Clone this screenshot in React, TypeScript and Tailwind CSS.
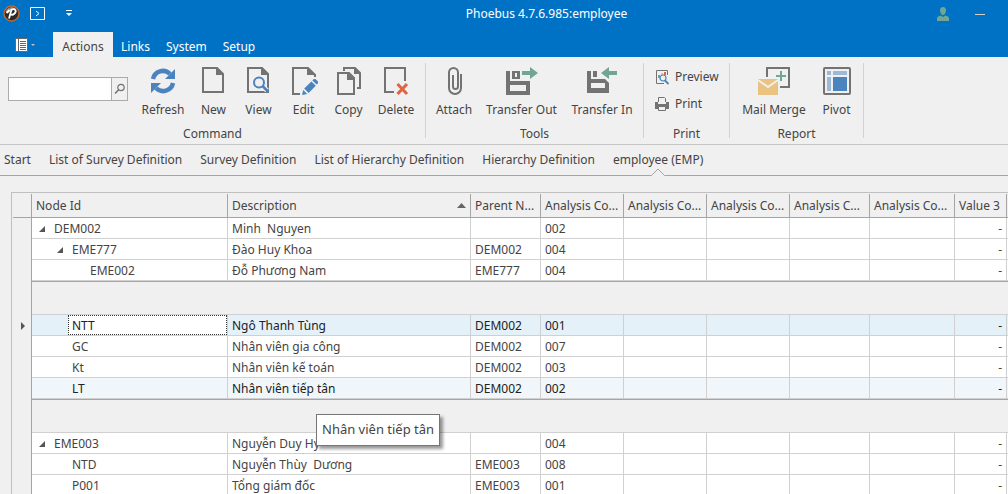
import { useState, type ReactNode } from "react";

type Row = {
  id: string;
  level: number;
  expanded?: boolean;
  description: string;
  parent: string;
  code: string;
};

const groups: Row[][] = [
  [
    { id: "DEM002", level: 0, expanded: true, description: "Minh  Nguyen", parent: "", code: "002" },
    { id: "EME777", level: 1, expanded: true, description: "Đào Huy Khoa", parent: "DEM002", code: "004" },
    { id: "EME002", level: 2, description: "Đỗ Phương Nam", parent: "EME777", code: "004" },
  ],
  [
    { id: "NTT", level: 1, description: "Ngô Thanh Tùng", parent: "DEM002", code: "001" },
    { id: "GC", level: 1, description: "Nhân viên gia công", parent: "DEM002", code: "007" },
    { id: "Kt", level: 1, description: "Nhân viên kế toán", parent: "DEM002", code: "003" },
    { id: "LT", level: 1, description: "Nhân viên tiếp tân", parent: "DEM002", code: "002" },
  ],
  [
    { id: "EME003", level: 0, expanded: true, description: "Nguyễn Duy Hỷ", parent: "", code: "004" },
    { id: "NTD", level: 1, description: "Nguyễn Thùy  Dương", parent: "EME003", code: "008" },
    { id: "P001", level: 1, description: "Tổng giám đốc", parent: "EME003", code: "001" },
  ],
];

const columns = [
  { label: "Node Id", width: "w-[196px]" },
  { label: "Description", width: "w-[243px]", sorted: true },
  { label: "Parent N...", width: "w-[70px]" },
  { label: "Analysis Co...", width: "w-[83px]" },
  { label: "Analysis Co...", width: "w-[83px]" },
  { label: "Analysis Co...", width: "w-[83px]" },
  { label: "Analysis C...", width: "w-[80px]" },
  { label: "Analysis Co...", width: "w-[85px]" },
  { label: "Value 3", width: "w-[52px]" },
];

const docTabs = [
  "Start",
  "List of Survey Definition",
  "Survey Definition",
  "List of Hierarchy Definition",
  "Hierarchy Definition",
  "employee (EMP)",
];

const indent = ["pl-[22px]", "pl-10", "pl-[58px]"];
const expanderIndent = ["pl-[7px]", "pl-[25px]", "pl-[43px]"];

function Icon({ children }: { children: ReactNode }) {
  return (
    <svg width="32" height="32" viewBox="0 0 32 32" fill="none" className="shrink-0" aria-hidden="true">
      {children}
    </svg>
  );
}

const refreshIcon = (
  <Icon>
    <path d="M6 14a10 10 0 0 1 17-5" stroke="#4b83bf" strokeWidth="4.5" />
    <path d="M28 4v10H18z" fill="#4b83bf" />
    <path d="M26 18a10 10 0 0 1-17 5" stroke="#4b83bf" strokeWidth="4.5" />
    <path d="M4 28V18h10z" fill="#4b83bf" />
  </Icon>
);

const newIcon = (
  <Icon>
    <path d="M19 3H5v24h20V9z" stroke="#737373" strokeWidth="2" />
    <path d="M18 2v8h8z" fill="#737373" />
  </Icon>
);

const viewIcon = (
  <Icon>
    <path d="M19 3H5v24h20V9z" stroke="#737373" strokeWidth="2" />
    <path d="M18 2v8h8z" fill="#737373" />
    <circle cx="16" cy="17.5" r="6" fill="#f0f0f0" stroke="#f0f0f0" strokeWidth="3" />
    <path d="M20 21.5l4 4" stroke="#f0f0f0" strokeWidth="5" />
    <circle cx="16" cy="17.5" r="5" stroke="#4b83bf" strokeWidth="2" />
    <path d="M19.5 21l6 6" stroke="#4b83bf" strokeWidth="2.5" />
  </Icon>
);

const editIcon = (
  <Icon>
    <path d="M12 29H5V3h15l7 7v2" stroke="#737373" strokeWidth="2" />
    <path d="M19 2v8h9z" fill="#737373" />
    <path
      d="M14 30l1.2-5 4 4zM16.2 23.6l7.2-7.2 4.4 4.4-7.2 7.2zM24.4 15.4l1.4-1.4h1.6l2.6 2.6v1.6l-1.4 1.4z"
      fill="#4b83bf"
    />
  </Icon>
);

const copyIcon = (
  <Icon>
    <path d="M11 6V3h11l5 5v15h-3" stroke="#737373" strokeWidth="2" />
    <path d="M21 2v7h7z" fill="#737373" />
    <path d="M16 8H5v21h16V13z" stroke="#737373" strokeWidth="2" fill="#f0f0f0" />
    <path d="M14 7v8h8z" fill="#737373" />
  </Icon>
);

const deleteIcon = (
  <Icon>
    <path d="M14 27H5V3h20v13" stroke="#737373" strokeWidth="2" />
    <path d="M17.5 19l9.5 10M27 19l-9.5 10" stroke="#dd6544" strokeWidth="3" />
  </Icon>
);

const attachIcon = (
  <Icon>
    <path
      d="M23 9v14a6 6 0 0 1-12 0V7.5a4.5 4.5 0 0 1 9 0v14a2.5 2.5 0 0 1-5 0V10"
      stroke="#737373"
      strokeWidth="2"
    />
  </Icon>
);

const transferOutIcon = (
  <Icon>
    <path fillRule="evenodd" d="M0 6h4v10h20v14H0zM4 20v6h16v-6z" fill="#737373" />
    <path fillRule="evenodd" d="M6 6h8v8H6zM9 8v4h2V8z" fill="#737373" />
    <path d="M16 6h8V2l8 6-8 6v-4h-8z" fill="#71a692" />
  </Icon>
);

const transferInIcon = (
  <Icon>
    <path fillRule="evenodd" d="M1 6h4v8h14l4 4v10H1zM5 18v5h14v-5z" fill="#737373" />
    <path d="M7 6h4v6H7z" fill="#737373" />
    <path d="M31 6h-8V2l-8 6 8 6v-4h8z" fill="#71a692" />
  </Icon>
);

const mailMergeIcon = (
  <Icon>
    <path d="M9 12V3h22v19h-9" stroke="#737373" strokeWidth="2" />
    <path d="M23 6v10M18 11h10" stroke="#71a692" strokeWidth="2" />
    <path d="M0 14h20v16H0z" fill="#eac282" />
    <path d="M0 15l10 7 10-7" stroke="#f0f0f0" strokeWidth="2" />
  </Icon>
);

const pivotIcon = (
  <Icon>
    <rect x="3" y="3" width="26" height="26" rx="1" stroke="#737373" strokeWidth="2" />
    <path d="M6 6h4v4H6zM12 6h14v4H12zM6 12h4v14H6z" fill="#9db9d9" />
    <path d="M12 12h14v14H12z" fill="#4b83bf" />
  </Icon>
);

function RibbonButton({ label, icon, width }: { label: string; icon: ReactNode; width: string }) {
  return (
    <button type="button" className={`flex h-[60px] shrink-0 flex-col items-center whitespace-nowrap ${width}`}>
      {icon}
      <span className="mt-1 leading-[18px]">{label}</span>
    </button>
  );
}

function RibbonGroup({ title, children }: { title: string; children: ReactNode }) {
  return (
    <section className="flex h-[75px] shrink-0 flex-col border-r border-[#d2d2d2]" aria-label={title}>
      <div className="flex h-[62px] shrink-0 px-1 pt-[2px]">{children}</div>
      <div className="text-center leading-[18px]">{title}</div>
    </section>
  );
}

function TitleBar() {
  return (
    <header className="flex h-8 items-center pb-1 text-white">
      <div className="flex items-center pb-[2px] pl-[3px]">
        <svg width="17" height="17" viewBox="0 0 17 17" aria-hidden="true">
          <circle cx="8.5" cy="8.5" r="7.5" fill="#2b2b2b" stroke="#b56a35" strokeWidth="1.5" />
          <path d="M2.5 7a6.2 6.2 0 0 1 10-3.5L5 8z" fill="#8a8a8a" />
          <path
            d="M3.5 8l3-3M8.5 4.5L6 13.5M7.5 5c5.5-2.5 6.5 1.5 3.5 4-1 .8-2.5.8-3.5.3"
            stroke="#fff"
            strokeWidth="1.8"
            fill="none"
          />
        </svg>
        <button type="button" aria-label="Run command" className="ml-[10px] flex">
          <svg width="15" height="13" viewBox="0 0 15 13" fill="none" stroke="#fff">
            <path d="M.5.5h14v12H.5z" />
            <path d="M6 4l3 2.5L6 9" />
          </svg>
        </button>
        <button type="button" aria-label="Customize quick access" className="ml-[21px] flex">
          <svg width="6" height="6" viewBox="0 0 6 6" fill="#fff">
            <path d="M0 0h6v1H0zM0 3h6L3 6z" />
          </svg>
        </button>
      </div>
      <h1 className="flex-1 pl-[84px] text-center leading-4">Phoebus 4.7.6.985:employee</h1>
      <button type="button" aria-label="User" className="mr-[26px] flex">
        <svg width="12" height="14" viewBox="0 0 12 14" fill="#71a692">
          <path d="M6 0c2 0 3 1.3 3 3.2C9 5.5 7.7 8 6 8S3 5.5 3 3.2C3 1.3 4 0 6 0z" />
          <path d="M0 14v-3c0-1 2-2 3.5-2.5L6 10l2.5-1.5C10 9 12 10 12 11v3z" />
        </svg>
      </button>
      <button type="button" aria-label="Minimize" className="mr-[23px] flex h-4 w-[10px] items-center">
        <span className="h-px w-full bg-[#d8d0c6]" />
      </button>
    </header>
  );
}

function Ribbon() {
  return (
    <div className="flex h-[88px] overflow-hidden border-b border-[#c6c6c6] bg-[#f0f0f0] pt-[6px]">
      <RibbonGroup title="Command">
        <form
          className="mt-3 mr-[7px] ml-1 flex h-6 w-[120px] border border-[#ababab]"
          onSubmit={(e) => e.preventDefault()}
        >
          <input type="text" aria-label="Search" className="min-w-0 flex-1 bg-white px-1 outline-none" />
          <button
            type="submit"
            aria-label="Find"
            className="flex w-4 items-center justify-center border-l border-[#ababab]"
          >
            <svg width="12" height="12" viewBox="0 0 12 12" fill="none" stroke="#737373">
              <circle cx="7" cy="4.5" r="3.2" strokeWidth="1.2" />
              <path d="M4.5 7L1 10.5" strokeWidth="1.6" />
            </svg>
          </button>
        </form>
        <RibbonButton label="Refresh" icon={refreshIcon} width="w-14" />
        <RibbonButton label="New" icon={newIcon} width="w-[45px]" />
        <RibbonButton label="View" icon={viewIcon} width="w-[45px]" />
        <RibbonButton label="Edit" icon={editIcon} width="w-[45px]" />
        <RibbonButton label="Copy" icon={copyIcon} width="w-[45px]" />
        <RibbonButton label="Delete" icon={deleteIcon} width="w-[50px]" />
      </RibbonGroup>
      <RibbonGroup title="Tools">
        <RibbonButton label="Attach" icon={attachIcon} width="w-12" />
        <RibbonButton label="Transfer Out" icon={transferOutIcon} width="w-[87px]" />
        <RibbonButton label="Transfer In" icon={transferInIcon} width="w-[74px]" />
      </RibbonGroup>
      <RibbonGroup title="Print">
        <div className="flex w-[77px] flex-col pl-[7px]">
          <button type="button" className="flex h-6 items-center gap-1">
            <svg width="16" height="16" viewBox="0 0 16 16" fill="none">
              <path d="M12.5 6V1.5h-11v13H9" stroke="#737373" />
              <path d="M3 6h2v3H3z" fill="#71a692" />
              <path d="M6 4h2v3H6z" fill="#eac282" />
              <path d="M9 3h2v3H9z" fill="#dd6544" />
              <circle cx="8" cy="9" r="3" fill="#f0f0f0" stroke="#4b83bf" strokeWidth="1.2" />
              <path d="M10 11.5l3.5 3.5" stroke="#4b83bf" strokeWidth="1.8" />
            </svg>
            Preview
          </button>
          <button type="button" className="mt-[3px] flex h-6 items-center gap-1">
            <svg width="16" height="16" viewBox="0 0 16 16" fill="none">
              <path d="M0 6h3v2h8V6h3v7H0z" fill="#737373" />
              <path d="M3.5 6V1.5h6l1 1V6M3.5 10.5h7v4h-7z" stroke="#737373" fill="#f0f0f0" />
            </svg>
            Print
          </button>
        </div>
      </RibbonGroup>
      <RibbonGroup title="Report">
        <RibbonButton label="Mail Merge" icon={mailMergeIcon} width="w-20" />
        <RibbonButton label="Pivot" icon={pivotIcon} width="w-[45px]" />
      </RibbonGroup>
    </div>
  );
}

function rowClass(id: string, focused: string) {
  if (id === focused) return "bg-[#e5f1f9] text-[#222]";
  if (id === "LT") return "bg-[#f1f6fa] text-[#222]";
  return "bg-white text-[#444]";
}

function Grid() {
  const [focused, setFocused] = useState("NTT");
  const cell = "border-r border-b border-[#d0d0d0] px-1 pt-[2px] pb-0 leading-4 whitespace-pre";

  return (
    <div className="min-w-[997px] border-t border-l border-[#c0c0c0] pt-px pl-px">
      <table className="w-full table-fixed border-separate border-spacing-0">
        <thead>
          <tr className="h-6">
            <th className="w-[19px] border-r border-b border-[#a5a5a5] p-0" aria-label="Row indicator" />
            {columns.map((c, i) => (
              <th
                key={i}
                className={`overflow-hidden border-r border-b border-[#a5a5a5] px-1 py-0 text-left leading-4 font-normal whitespace-nowrap ${c.width}`}
              >
                {c.sorted ? (
                  <span className="flex items-center justify-between">
                    {c.label}
                    <svg width="9" height="5" viewBox="0 0 9 5" fill="#666" aria-hidden="true">
                      <path d="M0 5l4.5-5L9 5z" />
                    </svg>
                  </span>
                ) : (
                  c.label
                )}
              </th>
            ))}
            <th className="border-b border-[#a5a5a5] p-0" />
          </tr>
        </thead>
        {groups.map((rows, g) => (
          <tbody key={g}>
            {g > 0 && (
              <tr className="h-[34px]">
                <td className="border-r border-[#a5a5a5]" />
                <td colSpan={10} className="border-t border-b border-t-[#a5a5a5] border-b-[#d0d0d0]" />
              </tr>
            )}
            {rows.map((r) => (
              <tr key={r.id} className={`h-[21px] ${rowClass(r.id, focused)}`} onClick={() => setFocused(r.id)}>
                <td className="border-r border-[#a5a5a5] bg-[#f0f0f0] p-0">
                  {r.id === focused && (
                    <svg className="ml-2" width="4" height="8" viewBox="0 0 4 8" fill="#555" aria-hidden="true">
                      <path d="M0 0l4 4-4 4z" />
                    </svg>
                  )}
                </td>
                <td className="border-r border-b border-[#d0d0d0] p-0">
                  {r.expanded ? (
                    <div className={`flex items-center pt-[2px] leading-4 ${expanderIndent[r.level]}`}>
                      <button type="button" aria-label={`Collapse ${r.id}`} className="mr-[9px] flex">
                        <svg width="6" height="6" viewBox="0 0 6 6" fill="#555">
                          <path d="M6 0v6H0z" />
                        </svg>
                      </button>
                      {r.id}
                    </div>
                  ) : r.id === focused ? (
                    <div className="ml-9 flex h-5 items-center border border-dotted border-[#333] bg-white pt-[2px] pl-[3px] leading-4">
                      {r.id}
                    </div>
                  ) : (
                    <div className={`pt-[2px] leading-4 ${indent[r.level]}`}>{r.id}</div>
                  )}
                </td>
                <td className={cell}>{r.description}</td>
                <td className={cell}>{r.parent}</td>
                <td className={cell}>{r.code}</td>
                <td className={cell} />
                <td className={cell} />
                <td className={cell} />
                <td className={cell} />
                <td className={`${cell} text-right`}>-</td>
                <td className="border-b border-[#d0d0d0] p-0" />
              </tr>
            ))}
          </tbody>
        ))}
      </table>
    </div>
  );
}

export default function App() {
  const [activeDoc, setActiveDoc] = useState("employee (EMP)");

  return (
    <div className="relative h-screen overflow-hidden bg-[#f0f0f0] font-['Noto_Sans','Open_Sans',sans-serif] text-[12px] text-[#444]">
      <div className="bg-[#0072c6]">
        <TitleBar />
        <nav className="flex h-[25px] items-stretch text-white">
          <button
            type="button"
            aria-label="Application menu"
            className="flex w-[53px] items-center gap-[3px] pl-[15px]"
          >
            <svg width="13" height="14" viewBox="0 0 13 14" fill="none">
              <path d="M.5.5h12v13H.5z" fill="#fff" stroke="#666" />
              <path d="M3.5 1v12M5 3.5h6M5 5.5h6M5 7.5h6M5 9.5h6M5 11.5h6" stroke="#666" />
            </svg>
            <svg width="4" height="2" viewBox="0 0 4 2" fill="#c8c0b8">
              <path d="M0 0h4L2 2z" />
            </svg>
          </button>
          <button type="button" className="w-[60px] bg-[#f0f0f0] pt-1 text-[#444]">
            Actions
          </button>
          <button type="button" className="px-2 pt-1">
            Links
          </button>
          <button type="button" className="px-2 pt-1">
            System
          </button>
          <button type="button" className="px-2 pt-1">
            Setup
          </button>
        </nav>
      </div>

      <Ribbon />

      {/* Open documents */}
      <div className="flex h-[31px] gap-[18px] border-b border-[#a5a5a5] pl-1">
        {docTabs.map((t) => (
          <button
            key={t}
            type="button"
            className="relative h-[31px] pb-[2px] whitespace-nowrap"
            onClick={() => setActiveDoc(t)}
          >
            {t}
            {t === activeDoc && (
              <svg
                className="absolute bottom-0 left-1/2 -translate-x-1/2"
                width="14"
                height="8"
                viewBox="0 0 14 8"
                aria-hidden="true"
              >
                <path d="M.5 7.5L7 1l6.5 6.5V8H.5z" fill="#f0f0f0" />
                <path d="M.5 7.5L7 1l6.5 6.5" fill="none" stroke="#a5a5a5" />
              </svg>
            )}
          </button>
        ))}
      </div>

      <main className="pt-4 pl-[11px]">
        <Grid />
      </main>

      {/* Cell tooltip */}
      <div
        role="tooltip"
        className="absolute top-[414px] left-[316px] flex h-8 items-center border border-[#767676] bg-white px-[5px] text-[13px] whitespace-nowrap shadow-[3px_3px_3px_rgba(0,0,0,0.4)]"
      >
        Nhân viên tiếp tân
      </div>
    </div>
  );
}
